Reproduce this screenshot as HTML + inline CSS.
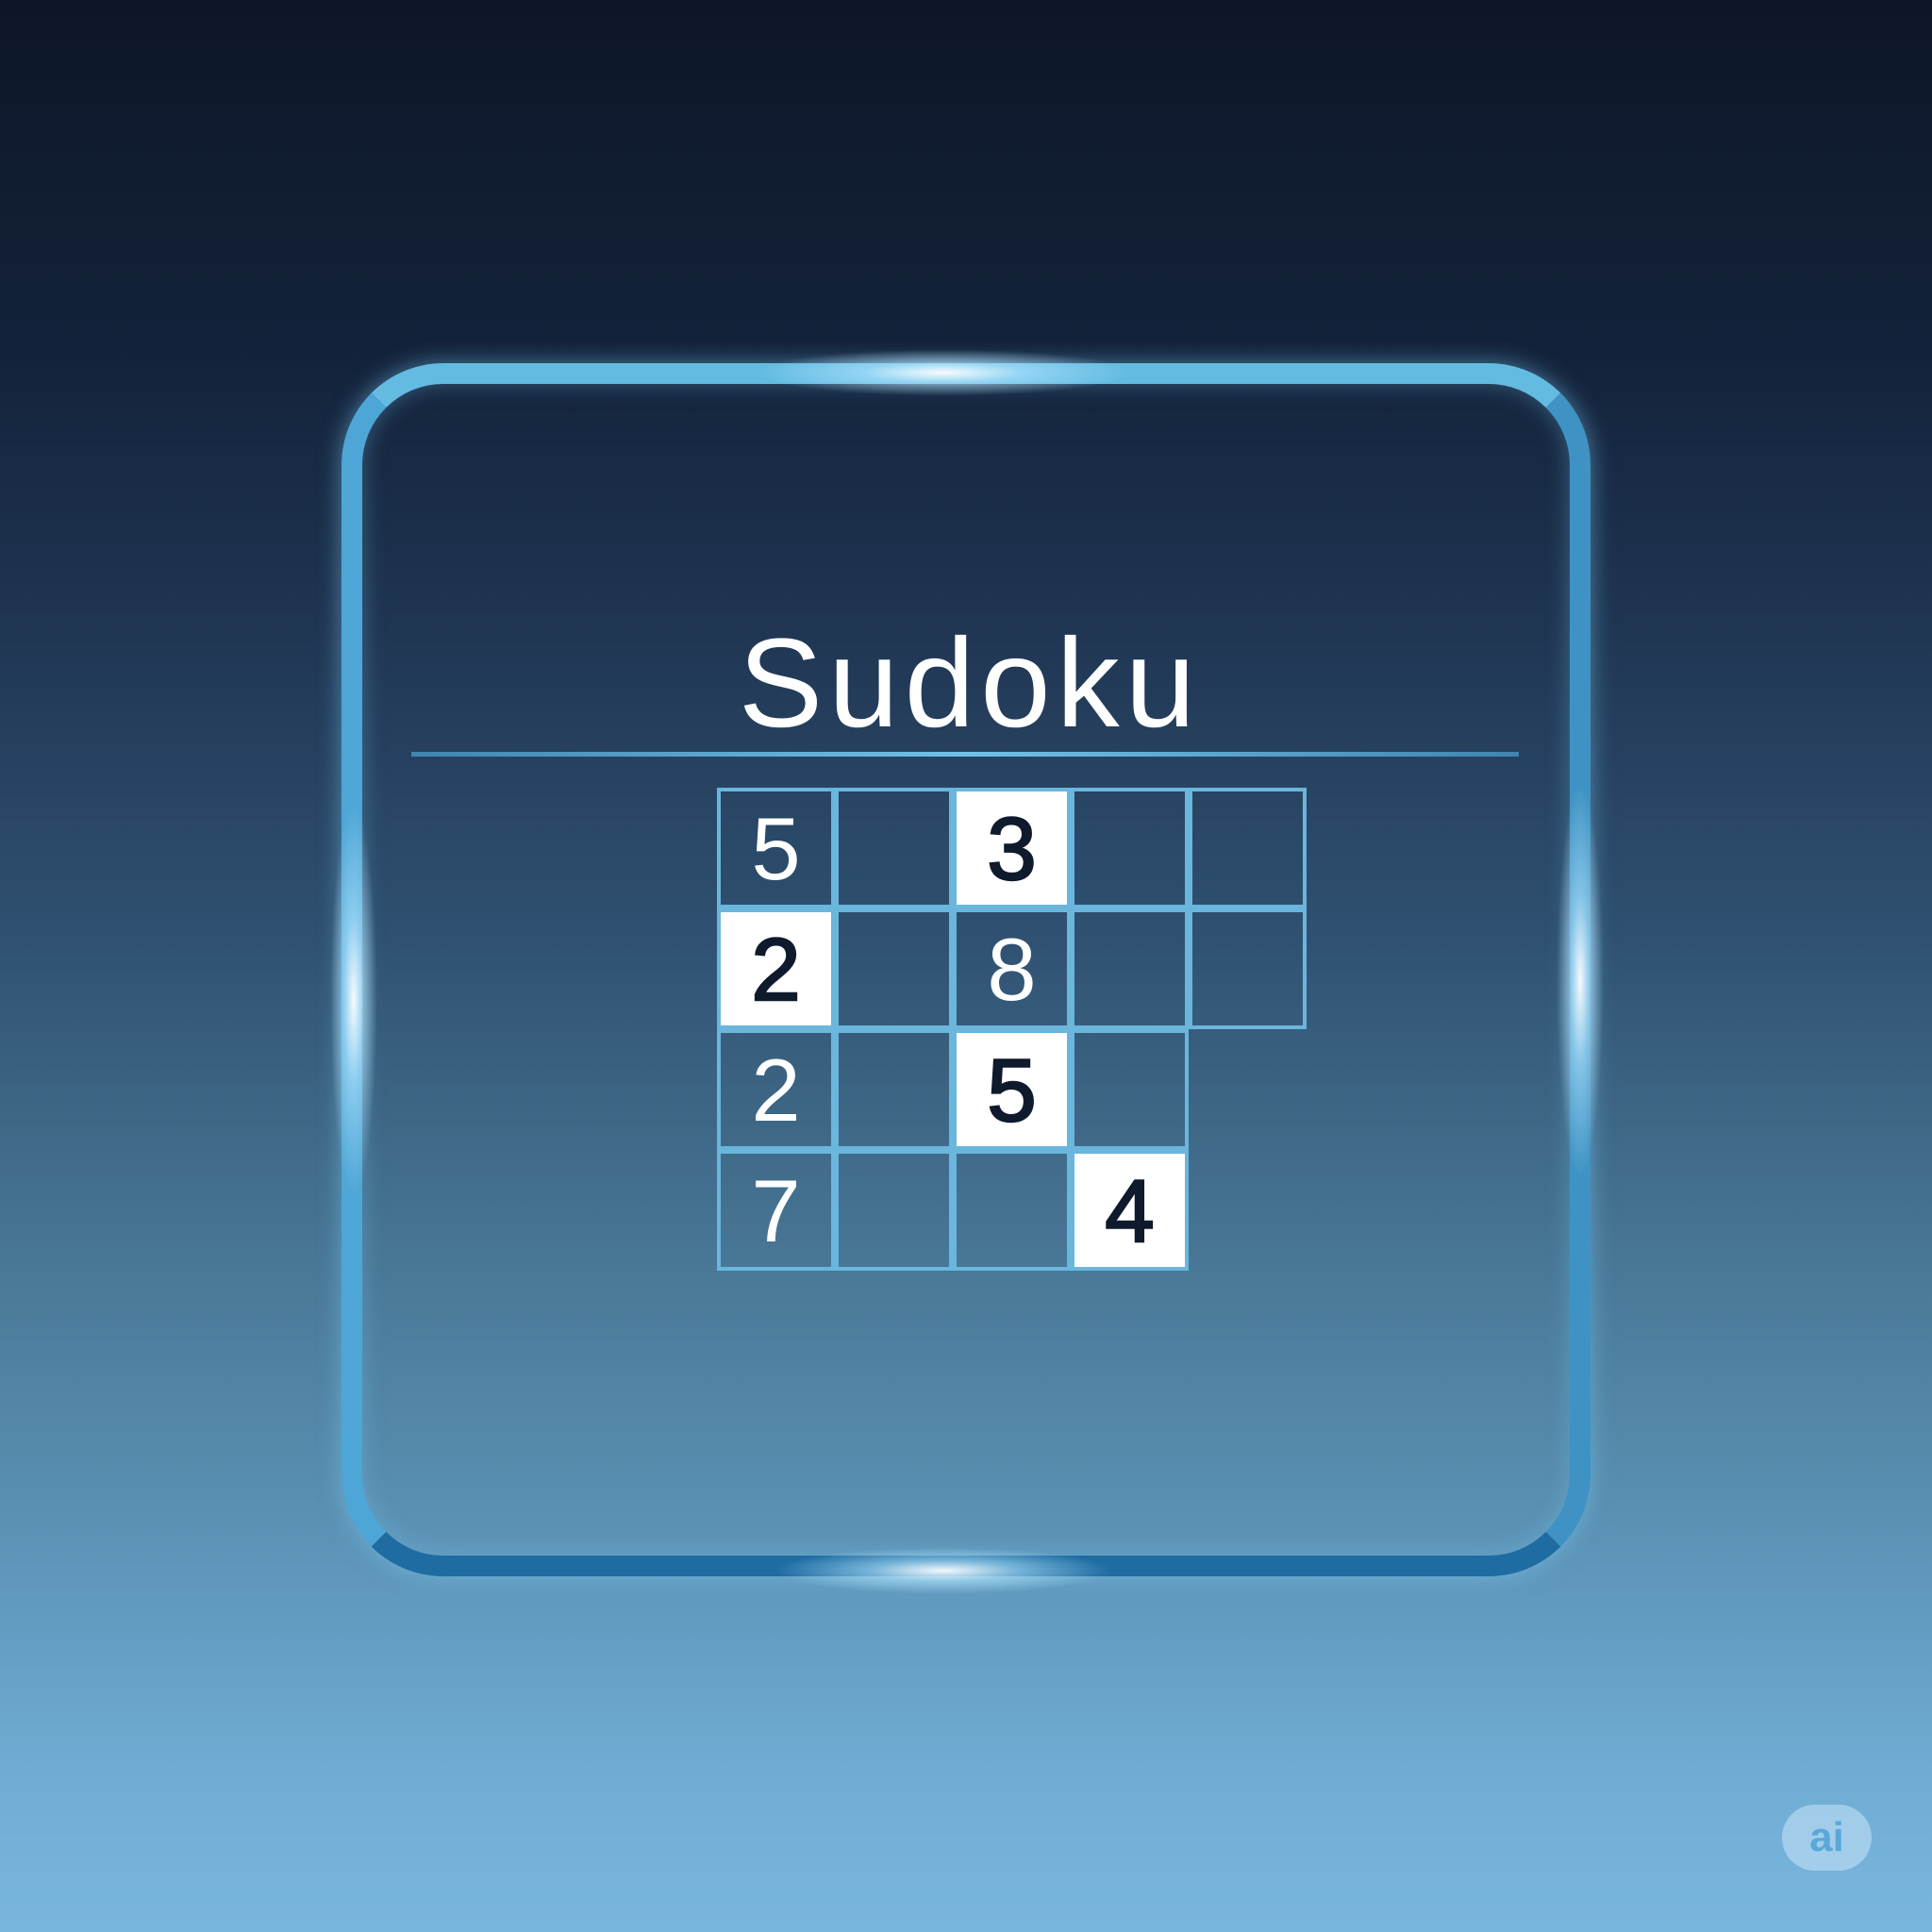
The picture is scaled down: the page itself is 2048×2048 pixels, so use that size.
<!DOCTYPE html>
<html><head><meta charset="utf-8"><style>
*{margin:0;padding:0;box-sizing:border-box}
body{width:2048px;height:2048px;overflow:hidden;position:relative;font-family:"Liberation Sans",sans-serif;
background:linear-gradient(180deg,#0d1628 0%,#13223a 18%,#1f3552 32%,#2f5070 48%,#44708f 62%,#5a90b2 78%,#70acd4 92%,#79b6de 100%)}
.frame{position:absolute;left:362px;top:385px;width:1324px;height:1286px;border-radius:108px;border:22px solid #4fa7d4;
box-shadow:0 0 24px rgba(120,200,240,.55),inset 0 0 24px rgba(120,200,240,.35);
border-color:#63bbe2 #3f93c4 #1e6ca2 #4ea6d6}
.glow{position:absolute;border-radius:50%;background:radial-gradient(ellipse,rgba(255,255,255,.95) 0%,rgba(180,230,255,.6) 30%,rgba(120,200,240,0) 70%)}
.title{position:absolute;left:0;width:2048px;top:658px;text-align:center;font-size:134px;color:#fff;line-height:1;padding-left:8px;letter-spacing:6px}
.line{position:absolute;left:436px;width:1174px;top:797px;height:5px;background:linear-gradient(90deg,#3f86b0,#6ec2e8 50%,#3f86b0)}
.grid{position:absolute;left:760px;top:835px}
.c{position:absolute;width:125px;height:128px;border:4px solid #6ab6dc;color:#fff;font-size:94px;text-align:center;line-height:122px}
.w{background:#fff;color:#0f1a2c;-webkit-text-stroke:2.5px #0f1a2c}
.ai{position:absolute;left:1889px;top:1913px;width:95px;height:70px;border-radius:35px;background:rgba(200,230,250,.55);color:#5aa8d8;font-weight:bold;font-size:44px;text-align:center;line-height:70px}
</style></head><body>
<div class="frame"></div>
<div class="glow" style="left:800px;top:370px;width:400px;height:50px"></div>
<div class="glow" style="left:820px;top:1640px;width:360px;height:50px"></div>
<div class="glow" style="left:350px;top:850px;width:50px;height:420px"></div>
<div class="glow" style="left:1650px;top:830px;width:50px;height:420px"></div>
<div class="title">Sudoku</div>
<div class="line"></div>
<div class="grid">
<div class="c" style="left:0;top:0">5</div>
<div class="c" style="left:125px;top:0"></div>
<div class="c w" style="left:250px;top:0">3</div>
<div class="c" style="left:375px;top:0"></div>
<div class="c" style="left:500px;top:0"></div>
<div class="c w" style="left:0;top:128px">2</div>
<div class="c" style="left:125px;top:128px"></div>
<div class="c" style="left:250px;top:128px">8</div>
<div class="c" style="left:375px;top:128px"></div>
<div class="c" style="left:500px;top:128px"></div>
<div class="c" style="left:0;top:256px">2</div>
<div class="c" style="left:125px;top:256px"></div>
<div class="c w" style="left:250px;top:256px">5</div>
<div class="c" style="left:375px;top:256px"></div>
<div class="c" style="left:0;top:384px">7</div>
<div class="c" style="left:125px;top:384px"></div>
<div class="c" style="left:250px;top:384px"></div>
<div class="c w" style="left:375px;top:384px">4</div>
</div>
<div class="ai">ai</div>
</body></html>
